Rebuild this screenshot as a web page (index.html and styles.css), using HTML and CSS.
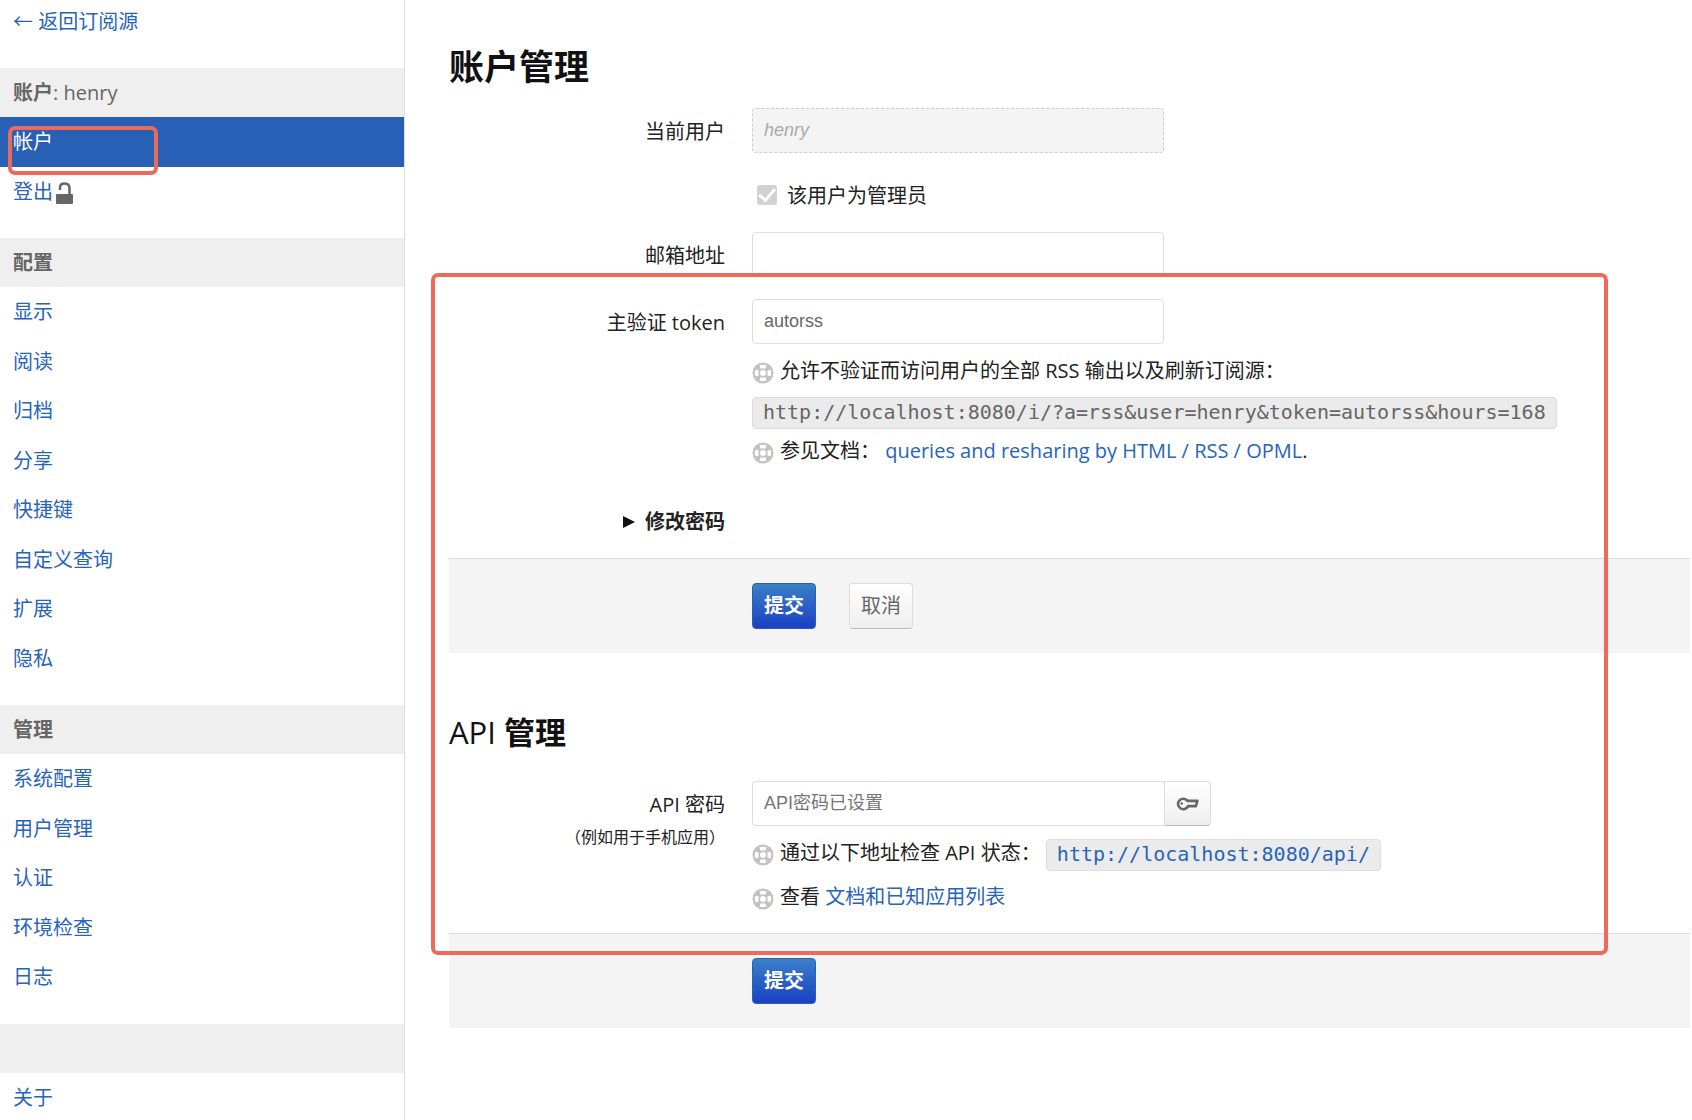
FILE: index.html
```
<!DOCTYPE html>
<html lang="zh-CN">

<head>
  <meta charset="UTF-8" />
  <meta name="viewport" content="width=device-width, initial-scale=1.0" />
  <title>账户管理</title>
  <link rel="stylesheet" href="styles.css">
</head>

<body>
  <!-- Shared icon used in front of every help text -->
  <svg class="sprite" aria-hidden="true">
    <symbol id="icon-help" viewBox="0 0 22 22">
      <circle cx="11" cy="11" r="10.500" fill="#c2c2c2" />
      <circle cx="11" cy="11" r="3" fill="#fff" />
      <path d="M7.500 3.600Q11 2 14.500 3.600L13.300 6.800Q11 6 8.700 6.800ZM7.500 18.400Q11 20 14.500 18.400L13.300 15.200Q11 16 8.700 15.200ZM3.600 7.500Q2 11 3.600 14.500L6.800 13.300Q6 11 6.800 8.700ZM18.400 7.500Q20 11 18.400 14.500L15.200 13.300Q16 11 15.200 8.700Z" fill="#fff" />
    </symbol>
  </svg>

  <nav class="sidebar">
    <a class="back" href="#">← 返回订阅源</a>

    <ul class="nav-list">
      <li class="nav-header">账户<span class="light">: henry</span></li>
      <li class="active"><a href="#">帐户</a></li>
      <li><a href="#">登出<svg class="icon-lock" viewBox="0 0 17 22" aria-hidden="true">
            <path d="M4 8V5.500Q4 1.500 8.500 1.500T13.500 5.500V13" fill="none" stroke="#666" stroke-width="2.500" />
            <rect x="0" y="12" width="17" height="10" rx="1" fill="#666" />
          </svg></a></li>
    </ul>

    <ul class="nav-list">
      <li class="nav-header">配置</li>
      <li><a href="#">显示</a></li>
      <li><a href="#">阅读</a></li>
      <li><a href="#">归档</a></li>
      <li><a href="#">分享</a></li>
      <li><a href="#">快捷键</a></li>
      <li><a href="#">自定义查询</a></li>
      <li><a href="#">扩展</a></li>
      <li><a href="#">隐私</a></li>
    </ul>

    <ul class="nav-list">
      <li class="nav-header">管理</li>
      <li><a href="#">系统配置</a></li>
      <li><a href="#">用户管理</a></li>
      <li><a href="#">认证</a></li>
      <li><a href="#">环境检查</a></li>
      <li><a href="#">日志</a></li>
    </ul>

    <ul class="nav-list">
      <li class="nav-header"></li>
      <li><a href="#">关于</a></li>
    </ul>

    <div class="mark mark-nav"></div>
  </nav>

  <main class="content">
    <h1>账户管理</h1>

    <form>
      <div class="form-group">
        <label for="currentUser">当前用户</label>
        <div class="controls">
          <input type="text" id="currentUser" value="henry" disabled />
        </div>
      </div>

      <div class="form-group">
        <div class="controls controls-only">
          <label class="checkbox" for="isAdmin">
            <input type="checkbox" id="isAdmin" checked disabled />
            该用户为管理员
          </label>
        </div>
      </div>

      <div class="form-group">
        <label for="email">邮箱地址</label>
        <div class="controls">
          <input type="email" id="email" />
        </div>
      </div>

      <div class="form-group">
        <label for="token">主验证 token</label>
        <div class="controls">
          <input type="text" id="token" value="autorss" />
          <p class="help"><svg class="icon"><use href="#icon-help" /></svg>允许不验证而访问用户的全部 RSS 输出以及刷新订阅源：</p>
          <kbd class="url">http://localhost:8080/i/?a=rss&amp;user=henry&amp;token=autorss&amp;hours=168</kbd>
          <p class="help help-doc"><svg class="icon"><use href="#icon-help" /></svg>参见文档： <a href="#">queries and resharing by HTML / RSS / OPML</a>.</p>
        </div>
      </div>

      <details class="password">
        <summary>修改密码</summary>
      </details>

      <div class="form-actions">
        <button type="submit" class="btn btn-important">提交</button>
        <button type="reset" class="btn">取消</button>
      </div>
    </form>

    <h2><span class="light">API</span> 管理</h2>

    <form>
      <div class="form-group form-group-last">
        <label for="apiPassword">API 密码<small>（例如用于手机应用）</small></label>
        <div class="controls">
          <div class="stick">
            <input type="password" id="apiPassword" placeholder="API密码已设置" />
            <button type="button" class="btn btn-key" aria-label="显示密码">
              <svg class="icon-key" viewBox="0 0 22 14" aria-hidden="true">
                <path d="M11 4.500H20.500L19 9.500H11.500A5 5 0 1 1 11 4.500Z" fill="none" stroke="#666" stroke-width="2.500" stroke-linejoin="round" />
                <circle cx="5.500" cy="7" r="1.200" fill="#666" />
              </svg>
            </button>
          </div>
          <p class="help"><svg class="icon"><use href="#icon-help" /></svg>通过以下地址检查 API 状态： <kbd class="url"><a href="#">http://localhost:8080/api/</a></kbd></p>
          <p class="help help-list"><svg class="icon"><use href="#icon-help" /></svg>查看 <a href="#">文档和已知应用列表</a></p>
        </div>
      </div>

      <div class="form-actions">
        <button type="submit" class="btn btn-important">提交</button>
      </div>
    </form>

    <div class="mark mark-form"></div>
  </main>
</body>

</html>
```
FILE: styles.css
```
* {
  box-sizing: border-box;
}

body {
  display: flex;
  margin: 0;
  min-height: 100vh;
  font-family: "Open Sans", "Noto Sans CJK SC", sans-serif;
  font-size: 20px;
  color: #222;
  background-color: #fff;
}

a {
  color: #2764ba;
  text-decoration: none;
}

.sprite {
  position: absolute;
  width: 0;
  height: 0;
}

.light {
  font-weight: 400;
}

/* Sidebar */
.sidebar {
  position: relative;
  flex: 0 0 405px;
  height: 100vh;
  overflow: hidden;
  border-right: 1px solid #ddd;
}

.back {
  display: block;
  height: 68px;
  padding: 0 13px;
  line-height: 44px;
}

.nav-list {
  list-style: none;
  margin: 0 0 22px;
  padding: 0;
}

.nav-list li {
  height: 49px;
  line-height: 50px;
}

.nav-list li:nth-child(even) {
  height: 50px;
}

.nav-list a {
  display: block;
  padding: 0 13px;
}

.nav-list .nav-header {
  padding: 0 13px;
  color: #666;
  font-weight: 700;
  background-color: #efefef;
}

.nav-list .active {
  background-color: #2860b6;
}

.nav-list .active a {
  color: #fff;
}

.icon-lock {
  width: 17px;
  height: 22px;
  margin-left: 3px;
  vertical-align: -5px;
}

/* Main content */
.content {
  position: relative;
  flex: 1;
  min-width: 0;
  padding: 42px 2px 0 44px;
}

h1,
h2 {
  line-height: 50px;
  color: #111;
}

h1 {
  margin: 0 0 16px;
  font-size: 35px;
}

h2 {
  margin: 54px 0 24px;
  font-size: 31px;
}

.form-group {
  display: grid;
  grid-template-columns: 276px 1fr;
  column-gap: 27px;
  margin-bottom: 22px;
}

.form-group-last {
  margin-bottom: 16px;
}

.form-group > label {
  height: 45px;
  line-height: 48px;
  text-align: right;
}

.form-group small {
  display: block;
  font-size: 16px;
  line-height: 16px;
}

.controls-only {
  grid-column: 2;
}

.checkbox {
  display: flex;
  align-items: center;
  gap: 10px;
  height: 35px;
  margin-top: 2px;
  margin-bottom: -2px;
  padding-left: 5px;
}

input[type="text"],
input[type="email"],
input[type="password"] {
  display: block;
  width: 412px;
  height: 45px;
  padding: 0 11px;
  font-family: "Liberation Sans", "Noto Sans CJK SC", sans-serif;
  font-size: 18px;
  color: #666;
  background-color: #fff;
  border: 1px solid #ddd;
  border-radius: 4px;
}

input[type="text"]:disabled {
  color: #aaa;
  font-style: italic;
  background-color: #f4f4f4;
  border: 1px dashed #ccc;
}

input::placeholder {
  color: #757575;
}

input[type="checkbox"] {
  display: grid;
  place-items: center;
  appearance: none;
  width: 20px;
  height: 20px;
  margin: 0;
  background-color: #d1d1d1;
  border-radius: 3px;
}

input[type="checkbox"]:checked::before {
  content: "";
  width: 7px;
  height: 13px;
  margin-bottom: 3px;
  border: solid #fff;
  border-width: 0 3px 3px 0;
  transform: rotate(40deg);
}

.help {
  margin: 7px 0 0;
  line-height: 40px;
}

.help-doc {
  margin-top: 2px;
}

.help-list {
  margin-top: 4px;
}

.icon {
  width: 22px;
  height: 22px;
  margin-right: 6px;
  vertical-align: -6px;
}

.url {
  display: inline-block;
  height: 32px;
  padding: 0 10px;
  font-family: "DejaVu Sans Mono", monospace;
  font-size: 20px;
  line-height: 28px;
  color: #666;
  background-color: #ebebeb;
  border: 1px solid #ddd;
  border-radius: 4px;
}

.controls > .url {
  display: block;
  width: fit-content;
  margin-top: 6px;
}

.help .url {
  vertical-align: middle;
}

.password {
  width: 276px;
  margin-top: 31px;
}

.password summary {
  display: flex;
  justify-content: flex-end;
  align-items: center;
  gap: 10px;
  line-height: 40px;
  font-weight: 700;
}

.password summary::before {
  content: "";
  border-left: 12px solid #111;
  border-top: 6px solid transparent;
  border-bottom: 6px solid transparent;
}

.form-actions {
  display: flex;
  gap: 33px;
  margin-top: 16px;
  padding: 24px 0 24px 303px;
  background-color: #f4f4f4;
  border-top: 1px solid #ddd;
}

.btn {
  height: 46px;
  padding: 0 11px;
  font-family: inherit;
  font-size: 20px;
  line-height: 44px;
  color: #666;
  background: linear-gradient(#fff, #eee);
  border: 1px solid #ddd;
  border-bottom-color: #bbb;
  border-radius: 4px;
}

.btn-important {
  color: #fff;
  font-weight: 700;
  background: linear-gradient(#3a80c8, #1a40c4);
  border-color: #2860b6;
}

/* Text box with the key button attached to its right side */
.stick {
  display: flex;
}

.stick input[type="password"] {
  border-right: 0;
  border-radius: 4px 0 0 4px;
}

.btn-key {
  display: flex;
  align-items: center;
  height: 45px;
  border-radius: 0 4px 4px 0;
}

.icon-key {
  width: 23px;
  height: 15px;
}

/* Red highlight frames, drawn over the page */
.mark {
  position: absolute;
  border: 4px solid #ec6a5b;
  border-radius: 7px;
  pointer-events: none;
}

.mark-nav {
  top: 126px;
  left: 8px;
  width: 150px;
  height: 49px;
}

.mark-form {
  top: 273px;
  left: 26px;
  right: 84px;
  height: 682px;
}
```
